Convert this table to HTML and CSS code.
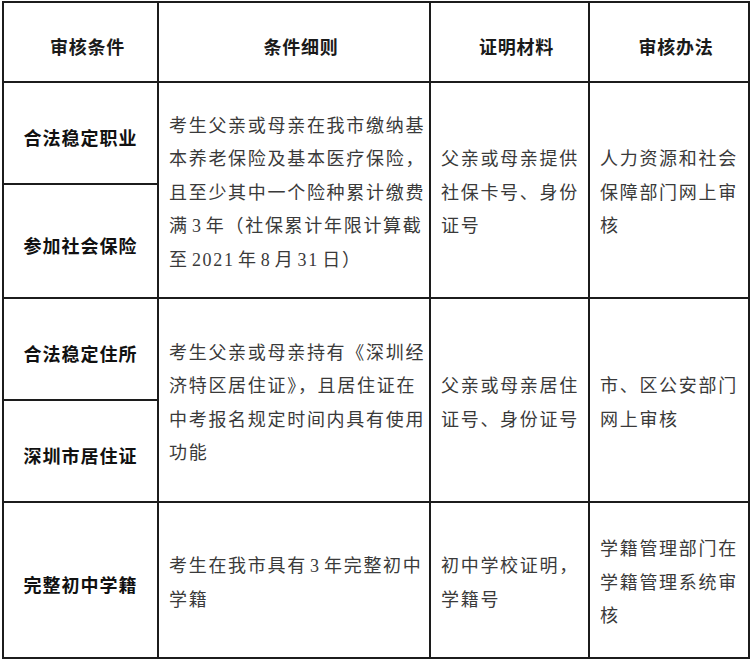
FILE: index.html
```html
<!DOCTYPE html>
<html lang="zh-CN">
<head>
<meta charset="utf-8">
<title>审核条件</title>
<link rel="stylesheet" href="styles.css">
</head>
<body>
<div class="sheet">
  <div class="cell head">审核条件</div>
  <div class="cell head">条件细则</div>
  <div class="cell head">证明材料</div>
  <div class="cell head">审核办法</div>

  <div class="cell cond r1a">合法稳定职业</div>
  <div class="cell text span-r1">考生父亲或母亲在我市缴纳基<br>本养老保险及基本医疗保险，<br>且至少其中一个险种累计缴费<br>满 3 年（社保累计年限计算截<br>至 2021 年 8 月 31 日）</div>
  <div class="cell text span-r1">父亲或母亲提供<br>社保卡号、身份<br>证号</div>
  <div class="cell text span-r1">人力资源和社会<br>保障部门网上审<br>核</div>
  <div class="cell cond r1b">参加社会保险</div>

  <div class="cell cond r2a">合法稳定住所</div>
  <div class="cell text span-r2">考生父亲或母亲持有《深圳经<br>济特区居住证》，且居住证在<br>中考报名规定时间内具有使用<br>功能</div>
  <div class="cell text span-r2">父亲或母亲居住<br>证号、身份证号</div>
  <div class="cell text span-r2">市、区公安部门<br>网上审核</div>
  <div class="cell cond r2b">深圳市居住证</div>

  <div class="cell cond r3">完整初中学籍</div>
  <div class="cell text r3">考生在我市具有 3 年完整初中<br>学籍</div>
  <div class="cell text r3">初中学校证明，<br>学籍号</div>
  <div class="cell text r3">学籍管理部门在<br>学籍管理系统审<br>核</div>
</div>
</body>
</html>
```

FILE: styles.css
```css
html, body {
  margin: 0;
  padding: 0;
  background: #ffffff;
}

body {
  padding: 1px 0 0 2px;
}

.sheet {
  width: 748px;
  box-sizing: border-box;
  display: grid;
  grid-template-columns: 153px 270px 157px 158px;
  grid-template-rows: 78px 100px 112px 100px 100px 154px;
  gap: 2px;
  padding: 2px;
  background: #1c1c1c;
  font-family: "Liberation Serif", "Noto Sans CJK SC", serif;
}

.cell {
  background: #ffffff;
  display: flex;
  align-items: center;
  white-space: nowrap;
  box-sizing: border-box;
}

.head {
  justify-content: center;
  padding: 8px 0 0 14px;
  font-family: "Noto Sans CJK SC", sans-serif;
  font-weight: 700;
  font-size: 18px;
  letter-spacing: 0.8px;
  color: #1a1a1a;
}

.cond {
  justify-content: center;
  padding-top: 8px;
  font-family: "Noto Sans CJK SC", sans-serif;
  font-weight: 700;
  font-size: 18px;
  letter-spacing: 1px;
  color: #111111;
}

.text {
  padding: 7px 0 0 10px;
  font-size: 18px;
  letter-spacing: 1.7px;
  word-spacing: -3px;
  line-height: 33.4px;
  color: #3a3a3a;
}

.r1a { grid-column: 1; grid-row: 2; }
.r1b { grid-column: 1; grid-row: 3; }
.span-r1 { grid-row: 2 / span 2; }
.r2a { grid-column: 1; grid-row: 4; }
.r2b { grid-column: 1; grid-row: 5; }
.span-r2 { grid-row: 4 / span 2; }
.r3 { grid-row: 6; }
```
